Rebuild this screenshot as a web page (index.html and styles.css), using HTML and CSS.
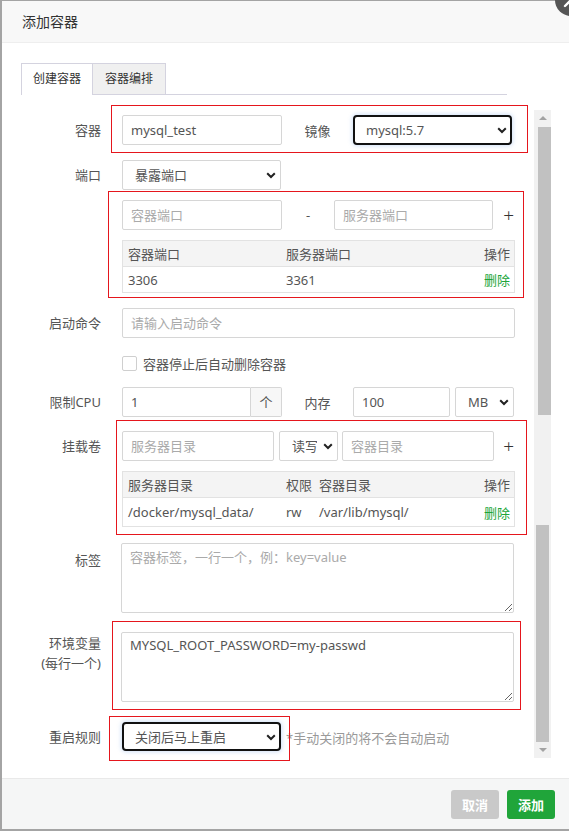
FILE: index.html
```html
<!DOCTYPE html>
<html lang="zh-CN">
<head>
<meta charset="utf-8">
<title>添加容器</title>
<link rel="stylesheet" href="styles.css">
</head>
<body>
<div class="layer">
  <span class="layer-close" title="关闭">
    <svg width="32" height="32" viewBox="0 0 32 32"><path d="M10 10l12 12M22 10L10 22" stroke="#fff" stroke-width="2.4" stroke-linecap="round"/></svg>
  </span>
  <div class="layer-title">添加容器</div>

  <div class="layer-body">
    <div class="tab-bar">
      <span class="tab active">创建容器</span>
      <span class="tab">容器编排</span>
    </div>

    <div class="scroll-wrap">
      <form class="form">
        <!-- name + image -->
        <div class="row">
          <label class="lbl">容器</label>
          <div class="ctl hl hl-name">
            <input class="ipt w160" value="mysql_test">
            <span class="mid-lbl">镜像</span>
            <span class="sel-wrap w159">
              <select class="sel focus"><option>mysql:5.7</option></select>
              <svg class="chev" width="10" height="7" viewBox="0 0 10 7"><path d="M1.2 1.2L5 5l3.8-3.8" fill="none" stroke="#222" stroke-width="2"/></svg>
            </span>
          </div>
        </div>

        <!-- port mode -->
        <div class="row mt15">
          <label class="lbl">端口</label>
          <div class="ctl">
            <span class="sel-wrap w159">
              <select class="sel"><option>暴露端口</option></select>
              <svg class="chev" width="10" height="7" viewBox="0 0 10 7"><path d="M1.2 1.2L5 5l3.8-3.8" fill="none" stroke="#222" stroke-width="2"/></svg>
            </span>
          </div>
        </div>

        <!-- port mapping -->
        <div class="row mt10">
          <span class="lbl"></span>
          <div class="ctl col hl hl-port">
            <div class="line">
              <input class="ipt w160" placeholder="容器端口">
              <span class="dash">-</span>
              <input class="ipt w159" placeholder="服务器端口">
              <span class="plus">+</span>
            </div>
            <table class="tbl">
              <colgroup><col style="width:158px"><col><col style="width:50px"></colgroup>
              <thead><tr><th>容器端口</th><th>服务器端口</th><th class="op">操作</th></tr></thead>
              <tbody><tr><td>3306</td><td>3361</td><td class="op"><a class="del">删除</a></td></tr></tbody>
            </table>
          </div>
        </div>

        <!-- command -->
        <div class="row mt15">
          <label class="lbl">启动命令</label>
          <div class="ctl">
            <input class="ipt wfull" placeholder="请输入启动命令">
          </div>
        </div>

        <!-- auto remove -->
        <div class="row mt17">
          <span class="lbl"></span>
          <label class="ctl check">
            <input type="checkbox" class="cb">
            <span>容器停止后自动删除容器</span>
          </label>
        </div>

        <!-- cpu + memory -->
        <div class="row mt16">
          <label class="lbl">限制CPU</label>
          <div class="ctl">
            <input class="ipt w129 join" value="1">
            <span class="addon">个</span>
            <span class="mid-lbl">内存</span>
            <input class="ipt w97" value="100">
            <span class="sel-wrap w59 ml5">
              <select class="sel"><option>MB</option></select>
              <svg class="chev" width="10" height="7" viewBox="0 0 10 7"><path d="M1.2 1.2L5 5l3.8-3.8" fill="none" stroke="#222" stroke-width="2"/></svg>
            </span>
          </div>
        </div>

        <!-- volumes -->
        <div class="row mt14">
          <label class="lbl">挂载卷</label>
          <div class="ctl col hl hl-vol">
            <div class="line">
              <input class="ipt w152" placeholder="服务器目录">
              <span class="sel-wrap w59 ml5">
                <select class="sel"><option>读写</option></select>
                <svg class="chev" width="10" height="7" viewBox="0 0 10 7"><path d="M1.2 1.2L5 5l3.8-3.8" fill="none" stroke="#222" stroke-width="2"/></svg>
              </span>
              <input class="ipt w152 ml4" placeholder="容器目录">
              <span class="plus">+</span>
            </div>
            <table class="tbl vol">
              <colgroup><col style="width:158px"><col style="width:33px"><col><col style="width:50px"></colgroup>
              <thead><tr><th>服务器目录</th><th>权限</th><th>容器目录</th><th class="op">操作</th></tr></thead>
              <tbody><tr><td>/docker/mysql_data/</td><td>rw</td><td>/var/lib/mysql/</td><td class="op"><a class="del">删除</a></td></tr></tbody>
            </table>
          </div>
        </div>

        <!-- labels -->
        <div class="row mt16">
          <label class="lbl lbl-top">标签</label>
          <div class="ctl">
            <textarea class="txt" placeholder="容器标签，一行一个，例：key=value"></textarea>
          </div>
        </div>

        <!-- environment -->
        <div class="row mt19">
          <label class="lbl lbl-multi">环境变量<br>(每行一个)</label>
          <div class="ctl hl hl-env">
            <textarea class="txt">MYSQL_ROOT_PASSWORD=my-passwd</textarea>
          </div>
        </div>

        <!-- restart policy -->
        <div class="row mt20">
          <label class="lbl">重启规则</label>
          <div class="ctl">
            <span class="sel-wrap w159 hl hl-restart">
              <select class="sel focus"><option>关闭后马上重启</option></select>
              <svg class="chev" width="10" height="7" viewBox="0 0 10 7"><path d="M1.2 1.2L5 5l3.8-3.8" fill="none" stroke="#222" stroke-width="2"/></svg>
            </span>
            <span class="hint">*手动关闭的将不会自动启动</span>
          </div>
        </div>
      </form>

      <div class="vscroll" aria-hidden="true">
        <span class="arr up"></span>
        <span class="thumb t1"></span>
        <span class="track-gap"></span>
        <span class="thumb t2"></span>
        <span class="arr down"></span>
      </div>
    </div>
  </div>

  <div class="layer-foot">
    <button type="button" class="btn cancel">取消</button>
    <button type="button" class="btn add">添加</button>
  </div>
</div>
</body>
</html>
```

FILE: styles.css
```css
html, body {
  margin: 0;
  height: 100%;
}

body {
  background: #a4a4a4;
  font: 13px "Noto Sans", "Noto Sans CJK SC", sans-serif;
  color: #555;
  overflow: hidden;
}

/* dialog frame */
.layer {
  position: relative;
  margin: 1px 0 0 2px;
  width: 567px;
  height: 828px;
  background: #fff;
  display: flex;
  flex-direction: column;
}

.layer-close {
  position: absolute;
  left: 553px;
  top: -17px;
  width: 32px;
  height: 32px;
  border-radius: 50%;
  background: #555;
}

.layer-close svg {
  display: block;
}

.layer-title {
  flex: none;
  height: 41px;
  line-height: 41px;
  padding-left: 20px;
  background: #f8f8f8;
  border-bottom: 1px solid #eee;
  font-size: 14px;
  color: #333;
}

.layer-body {
  flex: 1;
  display: flex;
  flex-direction: column;
  min-height: 0;
}

/* tabs */
.tab-bar {
  flex: none;
  display: flex;
  margin: 20px 0 0 19px;
  width: 486px;
  height: 31px;
  border-bottom: 1px solid #d4d3df;
}

.tab {
  box-sizing: border-box;
  width: 72px;
  height: 31px;
  line-height: 30px;
  text-align: center;
  font-size: 12px;
  color: #333;
  border: 1px solid #d4d3df;
  border-bottom: none;
  background: #f0f0f0;
}

.tab.active {
  background: #fff;
  height: 32px;
  margin-bottom: -1px;
}

.tab + .tab {
  width: 73px;
  border-left: none;
}

/* scrolling area */
.scroll-wrap {
  flex: 1;
  display: flex;
  min-height: 0;
}

.form {
  box-sizing: border-box;
  width: 532px;
  padding-top: 20px;
  margin: 0;
}

.row {
  display: flex;
  align-items: flex-start;
}

.mt10 { margin-top: 10px; }
.mt14 { margin-top: 14px; }
.mt15 { margin-top: 15px; }
.mt16 { margin-top: 16px; }
.mt17 { margin-top: 17px; }
.mt19 { margin-top: 19px; }
.mt20 { margin-top: 20px; }
.ml4 { margin-left: 4px; }
.ml5 { margin-left: 5px; }

.lbl {
  flex: none;
  width: 99px;
  margin-right: 21px;
  text-align: right;
  line-height: 30px;
  color: #555;
}

.lbl-top {
  padding-top: 2px;
}

.lbl-multi {
  line-height: 20px;
  padding-top: 1px;
}

.ctl {
  position: relative;
  width: 393px;
  display: flex;
  align-items: center;
}

.ctl.col {
  flex-direction: column;
  align-items: stretch;
}

.line {
  display: flex;
  align-items: center;
}

/* inputs */
.ipt {
  box-sizing: border-box;
  height: 30px;
  border: 1px solid #d6d6d6;
  border-radius: 2px;
  padding: 0 8px;
  font: inherit;
  color: #555;
  background: #fff;
  outline: none;
}

.ipt::placeholder,
.txt::placeholder {
  color: #aaa;
}

.w97 { width: 97px; }
.w129 { width: 129px; }
.w152 { width: 152px; }
.w159 { width: 159px; }
.w160 { width: 160px; }
.w59 { width: 59px; }
.wfull { width: 393px; }

.ipt.join {
  border-radius: 2px 0 0 2px;
}

.addon {
  box-sizing: border-box;
  width: 31px;
  height: 30px;
  line-height: 28px;
  text-align: center;
  border: 1px solid #d6d6d6;
  border-left: none;
  border-radius: 0 2px 2px 0;
  background: #f7f7f7;
  color: #555;
}

.mid-lbl {
  width: 71px;
  text-align: center;
  color: #555;
}

.dash {
  width: 52px;
  text-align: center;
  color: #555;
}

.plus {
  flex: 1;
  text-align: right;
  padding-right: 1px;
  font-size: 19px;
  font-weight: 300;
  line-height: 30px;
  color: #333;
}

/* selects */
.sel-wrap {
  position: relative;
  display: block;
  height: 30px;
  flex: none;
}

.sel {
  appearance: none;
  -webkit-appearance: none;
  box-sizing: border-box;
  width: 100%;
  height: 30px;
  border: 1px solid #d6d6d6;
  border-radius: 2px;
  padding: 0 20px 0 12px;
  font: inherit;
  color: #555;
  background: #fff;
  outline: none;
}

.sel.focus {
  border: 2px solid #111;
  border-radius: 4px;
  padding-left: 11px;
  box-shadow: 0 0 4px 1px rgba(120, 165, 230, 0.35);
}

.hl-restart .sel {
  height: 29px;
  margin-top: 0;
}

.chev {
  position: absolute;
  right: 5px;
  top: 12px;
  pointer-events: none;
}

/* tables */
.tbl {
  margin-top: 10px;
  width: 393px;
  table-layout: fixed;
  border-collapse: separate;
  border-spacing: 0;
  border: 1px solid #e2e2e2;
}

.tbl th,
.tbl td {
  padding: 0 4px 0 5px;
  height: 25px;
  text-align: left;
  font-weight: normal;
  white-space: nowrap;
  overflow: hidden;
  color: #555;
}

.tbl th {
  background: #f4f4f4;
}

.tbl td {
  border-top: 1px solid #e2e2e2;
}

.tbl.vol td {
  height: 28px;
}

.tbl .op {
  text-align: right;
}

.del {
  color: #20a53a;
}

/* checkbox */
.check {
  height: 16px;
  gap: 6px;
  color: #555;
}

.cb {
  appearance: none;
  -webkit-appearance: none;
  box-sizing: border-box;
  width: 15px;
  height: 15px;
  margin: 0;
  border: 1px solid #cfcfcf;
  border-radius: 2px;
  background: #fff;
}

/* textareas */
.txt {
  display: block;
  box-sizing: border-box;
  width: 393px;
  height: 70px;
  margin-left: -1px;
  border: 1px solid #d6d6d6;
  border-radius: 2px;
  padding: 3px 8px;
  font: inherit;
  line-height: 20px;
  color: #555;
  resize: vertical;
  outline: none;
}

.hl-env .txt {
  padding-top: 2px;
}

.hint {
  margin-left: 5px;
  color: #999;
}

/* annotation outlines */
.hl {
  position: relative;
}

.hl::after {
  content: "";
  position: absolute;
  border: 1px solid #e5161d;
  pointer-events: none;
}

.hl-name::after { left: -11px; right: -13px; top: -10px; bottom: -8px; }
.hl-port::after { left: -14px; right: -9px; top: -9px; bottom: -5px; }
.hl-vol::after { left: -6px; right: -12px; top: -11px; bottom: -8px; }
.hl-env::after { left: -10px; right: -6px; top: -11px; bottom: -8px; }
.hl-restart::after { left: -13px; right: -9px; top: -6px; bottom: -9px; }

/* scroll bar */
.vscroll {
  flex: none;
  margin-top: 15px;
  width: 17px;
  height: 648px;
  background: #f1f1f1;
  display: flex;
  flex-direction: column;
  align-items: center;
}

.arr {
  flex: none;
  width: 0;
  height: 0;
  border-left: 4px solid transparent;
  border-right: 4px solid transparent;
}

.arr.up {
  margin: 6px 0 7px;
  border-bottom: 4px solid #a3a3a3;
}

.arr.down {
  margin: 6px 0 6px;
  border-top: 4px solid #a3a3a3;
}

.thumb {
  flex: none;
  width: 13px;
  background: #c1c1c1;
}

.t1 { height: 288px; margin-left: 3px; }
.t2 { height: 217px; }

.track-gap {
  flex: none;
  height: 110px;
}

/* footer */
.layer-foot {
  flex: none;
  box-sizing: border-box;
  height: 51px;
  border-top: 1px solid #e9e9e9;
  background: #f5f6f6;
  display: flex;
  justify-content: flex-end;
  align-items: flex-start;
  padding: 11px 14px 0 0;
}

.btn {
  width: 48px;
  height: 29px;
  padding: 0;
  border: none;
  border-radius: 3px;
  font: bold 13px "Noto Sans", "Noto Sans CJK SC", sans-serif;
  color: #fff;
}

.btn.cancel {
  background: #c9c9c9;
}

.btn.add {
  margin-left: 8px;
  background: #20a53a;
}
```
